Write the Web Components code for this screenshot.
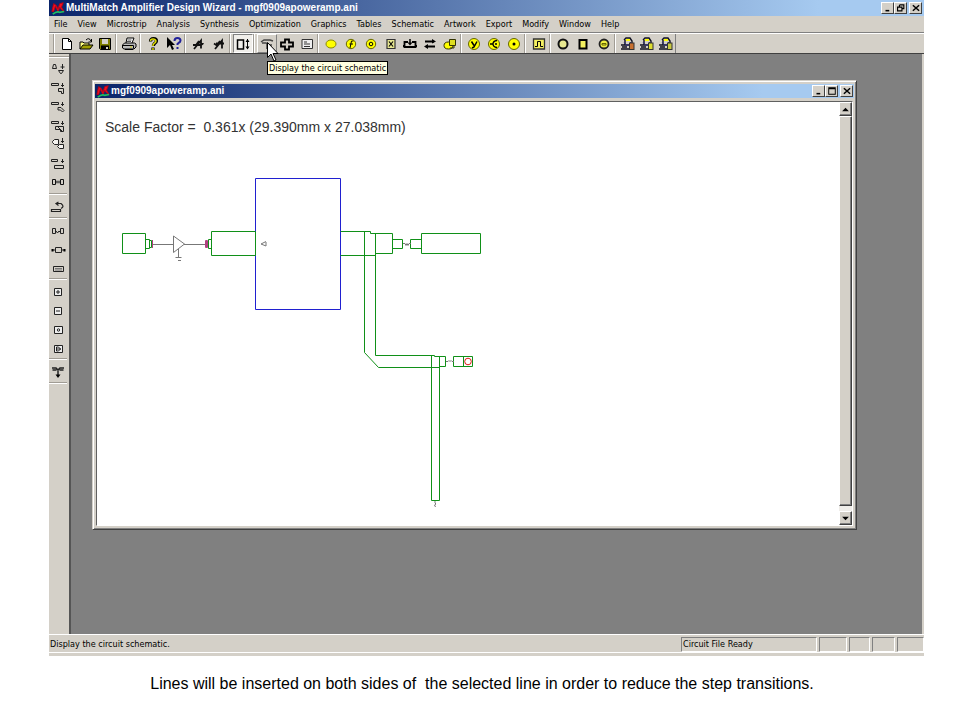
<!DOCTYPE html>
<html lang="en">
<head>
<meta charset="utf-8">
<title>MultiMatch Amplifier Design Wizard</title>
<style>
  html, body { height: 100%; }
  body {
    margin: 0; background: #fff; color: #000;
    font-family: "DejaVu Sans Condensed", "DejaVu Sans", sans-serif; font-size: 9px;
    display: flex; flex-direction: column;
  }
  app-window { flex: 1; margin: 0 36px 0 49px; min-height: 0; }
</style>
</head>
<body>
<app-window heading="MultiMatch Amplifier Design Wizard - mgf0909apoweramp.ani"></app-window>
<slide-caption>Lines will be inserted on both sides of  the selected line in order to reduce the step transitions.</slide-caption>

<script>
const Y = '#ffff00';
const lock = c => `<path d="M4 4l2-2h4l2 3v4H5V4M1 9h4M2 11h5M1 13h9" fill="none" stroke="#101020" stroke-width="1.4"/><path d="M6 3h4v2H6z" fill="${Y}"/><path d="M4 6l3 4 4-4" fill="none" stroke="#30307a"/><rect x="9.5" y="7" width="4.5" height="6.5" fill="${c}" stroke="#333"/>`;
const ICONS = {
  new: '<path d="M3.5 2.5h6l3 3v8h-9z" fill="#fff" stroke="#000"/><path d="M9.5 2.5v3h3" fill="none" stroke="#000"/>',
  open: '<path d="M2 13V6h3l1 1h5v2" fill="#ffff80" stroke="#000"/><path d="M2 13l3-4h10l-3 4z" fill="#a0a000" stroke="#000"/><path d="M8 4q3-3 5 1M13.5 3v3h-3" fill="none" stroke="#000"/>',
  save: '<path d="M2.5 2.5h11v11h-10l-1-1z" fill="#808000" stroke="#000"/><path d="M5 3h6v5H5z" fill="#d4d0c8"/><path d="M4 9.5h8V14H4z" fill="#000"/><path d="M9 11h2v2H9z" fill="#d4d0c8"/>',
  print: '<path d="M5 7l1-5h7l-2 5" fill="#fff" stroke="#000"/><path d="M6.5 4h4M6 5.5h4" stroke="#555"/><path d="M1.5 9l2-2h10l1.5 1v3l-2 2h-10l-1.5-1z" fill="#bbb" stroke="#000"/><path d="M2 9.5h10.5v3M4 13.5h8" fill="none" stroke="#000"/><path d="M9 11h2" stroke="#cc0"/>',
  help: '<path d="M5.5 5.5q0-3 3-3t3 2.5q0 1.5-2 2.5l-1 1.5v1M8 11.5v2.5" fill="none" stroke="#000" stroke-width="3.2"/><path d="M5.5 5q0-2 2.5-2t3 2q0 1.5-2 2.5l-1 1.5v1M8 12v2" fill="none" stroke="#dddd00" stroke-width="1.5"/>',
  whats: '<path d="M1 1v11l3-3 2 5 2-1-2-4h3z" fill="#000"/><path d="M8.5 5q0-3 3-3t3 2.5q0 1.5-2 2.5l-1 1v1M11.5 11v2" fill="none" stroke="#22229a" stroke-width="2"/>',
  runA: '<path d="M4 13l7-8.500v8M5 9h6q2-1 2-2M3 9h4M9 5l-3 4" fill="none" stroke="#111" stroke-width="1.8"/>',
  runB: '<path d="M4 13l7-8.500v8M5 7.500h8M3 7.500l3 2M9 5l-3 4" fill="none" stroke="#111" stroke-width="1.8"/>',
  height: '<path d="M2.5 4h6v9h-6z" fill="none" stroke="#000" stroke-width="1.5"/><path d="M12.5 3v10" stroke="#000"/><path d="M10.5 6l2-3 2 3zM10.5 10.5l2 3 2-3z"/>',
  schem: '<path d="M2 6l3-2h6l3 1M3 7h4l3 2h3M8 7v6" fill="none" stroke="#444" stroke-width="1.5"/>',
  cross: '<path d="M6 3.5h4v3h4v4h-4v3H6v-3H2v-4h4z" fill="none" stroke="#000" stroke-width="1.8"/>',
  text: '<path d="M3 3.5h10.500v9H3z" fill="#eee" stroke="#333"/><path d="M5 6h3M5 8h6M5 10.5h6" stroke="#333"/>',
  dot: `<ellipse cx="8" cy="8" rx="5" ry="4" fill="${Y}" stroke="#880"/>`,
  dotF: `<circle cx="8" cy="8" r="4.7" fill="${Y}" stroke="#660"/><path d="M7 12l1.5-7h2M6.5 8h3.5" fill="none" stroke="#000"/>`,
  dotO: `<circle cx="8" cy="8" r="4.7" fill="${Y}" stroke="#660"/><circle cx="8" cy="8" r="1.8" fill="none" stroke="#000"/>`,
  boxX: '<path d="M4 3.5h8v9H4z" fill="#e8e890" stroke="#333" stroke-width="1.2"/><path d="M6 5.5l4 5M10 5.5l-4 5" stroke="#000" stroke-width="1.2"/>',
  loop: '<path d="M6 6H2.500v5h11V6H10" fill="none" stroke="#000" stroke-width="1.8"/><path d="M8 3v5" stroke="#000" stroke-width="1.5"/><path d="M5.5 6.500h5L8 9.5zM1 9h2v2H1zM13 9h2v2h-2z"/>',
  swap: '<path d="M3 5.5h9M4 10.5h9" stroke="#000" stroke-width="2"/><path d="M10 3l4 2.5-4 2zM6 8l-4 2.5L6 13z"/>',
  shapes: `<ellipse cx="6.5" cy="9.5" rx="4.5" ry="3.5" fill="${Y}" stroke="#330"/><path d="M7.5 3.5h6v6h-6z" fill="#dede20" stroke="#330"/><path d="M8 12h4v-2" fill="none" stroke="#330"/>`,
  cY: `<circle cx="8" cy="8" r="5.5" fill="${Y}" stroke="#660"/><path d="M5.5 5.5l2.500 4M11 5.5L8 11l-2 1" fill="none" stroke="#000" stroke-width="1.5"/>`,
  cBranch: `<circle cx="8" cy="8" r="5.5" fill="${Y}" stroke="#660"/><path d="M4 8h3M11 4.5Q7 5 7 8t4 3.5M9 8h2" fill="none" stroke="#000" stroke-width="1.3"/>`,
  cDot: `<circle cx="8" cy="8" r="5.5" fill="${Y}" stroke="#660"/><circle cx="8" cy="8" r="1.5"/>`,
  pulse: '<path d="M2.5 3h11v10h-11z" fill="#f4f060" stroke="#333" stroke-width="1.3"/><path d="M4 10.5h2.5V5.5h3v5H12" fill="none" stroke="#000"/>',
  ring: '<circle cx="8" cy="8" r="4.5" fill="#e8e890" stroke="#111" stroke-width="2"/>',
  square: '<path d="M4.5 4h7v8.500h-7z" fill="#f4f060" stroke="#000" stroke-width="2"/>',
  ringO: '<circle cx="8" cy="8" r="4.5" fill="#f0f040" stroke="#222" stroke-width="1.8"/><path d="M6 7.5h4v1.5H6z" fill="none" stroke="#660"/>',
  lockR: lock('#c87030'), lockY: lock('#dede30'), lockG: lock('#c8c840'),
  v1: '<path d="M2.500 7.5l1-4h2l1 4zM8.500 9.5h5l-2 3h-1z" fill="none" stroke="#222"/><path d="M12.500 3v5M10.5 6h4" fill="none" stroke="#222"/>',
  v2: '<path d="M1.5 3.5h7v2h-7zM8.5 8.5h5v5h-2v-2h-3z" fill="none" stroke="#222"/><path d="M12.5 3v4M11 5.5h3" stroke="#222"/>',
  v3: '<path d="M1.5 3.5h7v2h-7zM8 8.500h3l3 3-1.5 1.5-2-2H8z" fill="none" stroke="#222"/><path d="M12.5 3v4M11 5.5h3" stroke="#222"/>',
  v4: '<path d="M1.5 3.5h7v2h-7zM5.5 8.5h8v5h-3v-2h-5z" fill="none" stroke="#222"/><path d="M12.5 3v4M11 5.5h3M7 8l5 5" stroke="#222"/>',
  v5: '<path d="M4.5 3.5h4v5h-4l-2-2v-1zM9.5 8.5h4v4h-4l-2-2z" fill="#f4f2ee" stroke="#222"/><path d="M12.5 2v5M11 5.500h3" stroke="#222"/>',
  v6: '<path d="M1.5 4.5h6v2h-6zM4.5 10.5h9v3h-9z" fill="none" stroke="#222"/><path d="M12.5 4v4M11 6.5h3" stroke="#222"/>',
  v7: '<path d="M2.5 5.5h3v5h-3zM10.5 5.5h3v5h-3zM6 8h4" fill="none" stroke="#111"/><path d="M7 6.5v3M9 6.5v3" stroke="#555"/>',
  v8: '<path d="M1.5 10.5h9v2h-9zM7 4.5h4q4 3 0 5M8.5 3L6 4.5l2.5 2" fill="none" stroke="#222" stroke-width="1.200"/>',
  v9: '<path d="M2.5 5.500h3v5h-3zM10.5 5.500h3v5h-3zM6 8l1.500 2L9 8l1 1" fill="none" stroke="#222"/>',
  v10: '<path d="M5.5 5.500h6v5h-6zM2 8h3M12 8h3" fill="none" stroke="#222"/><path d="M1.5 7h2v2.5h-2zM13.5 7h2v2.5h-2z"/>',
  v11: '<path d="M3.500 5.5h10v5h-10z" fill="none" stroke="#222"/><path d="M5 7.5h7M5 9h7" stroke="#777"/>',
  plus: '<path d="M4.5 4.5h7v7h-7z" fill="#eee" stroke="#222"/><path d="M6 8h4M8 6v4" stroke="#222"/>',
  minus: '<path d="M4.5 4.5h7v7h-7z" fill="#eee" stroke="#222"/><path d="M6 8h4" stroke="#222"/>',
  boxO: '<path d="M4.5 4.5h8v7h-8z" fill="#eee" stroke="#222"/><circle cx="8.5" cy="8" r="1.2" fill="none" stroke="#222"/>',
  boxP: '<path d="M4.5 4.5h8v7h-8z" fill="#eee" stroke="#222"/><path d="M6.5 6v4h2l2-2-2-2zM7 8h4" fill="none" stroke="#222"/>',
  tee: '<path d="M2 4h4l2 2 2-2h4M2.5 6h4M9.5 6h4M8 6v6" fill="none" stroke="#222" stroke-width="1.5"/><path d="M5.500 10.5h5L8 14z"/>',
  min: '<path d="M4 11h6v2.500H4z"/>',
  max: '<path d="M2 2h12v12H2zM3.500 5v7.500h9V5z" fill-rule="evenodd"/>',
  restore: '<path d="M5.5 3h7v6H10M5.500 3v3M2.500 6.500h7v6h-7z" fill="none" stroke="#000" stroke-width="1.8"/>',
  close: '<path d="M3 3.5l10 9M13 3.5l-10 9" stroke="#000" stroke-width="2.4"/>',
  up: '<path d="M2 11l6-6 6 6z"/>',
  down: '<path d="M2 5l6 6 6-6z"/>',
  logo: '<path d="M1 12L3 3l3 2 2 4 2-6 4-1-2 5 3 5-3-2-2-3-2 5-3-6-2 6z" fill="#f01020" stroke="#c00010"/><path d="M2 15q5-4 8-2l5-1" fill="none" stroke="#20c060" stroke-width="2"/>'
};
const icon = (name, size) => `<svg width="${size}" height="${size}" viewBox="0 0 16 16" fill="#000" aria-hidden="true">${ICONS[name]}</svg>`;

function define(name, render) {
  customElements.define(name, class extends HTMLElement {
    connectedCallback() {
      if (this.shadowRoot) return;
      this.attachShadow({ mode: 'open' }).innerHTML = render(this).trim();
    }
  });
}

/* One picture button of a toolbar; the slot takes a tooltip. */
define('tool-button', el => `
<style>
  :host { display: flex; flex: 1; position: relative; min-width: 0; min-height: 0; }
  button { flex: 1; min-width: 0; min-height: 0; padding: 0; border: 1px solid transparent; background: none; display: flex; align-items: center; justify-content: center; overflow: hidden; }
  :host([pressed]) button { background: #f0eeea; border-color: #808080 #fff #fff #808080; }
  :host([raised]) button { border-color: #fff #808080 #808080 #fff; }
  svg { display: block; flex: none; }
</style>
<button type="button" aria-label="${el.getAttribute('label')}">${icon(el.getAttribute('icon'), 16)}</button><slot></slot>`);

define('tool-tip', () => `
<style>
  :host { position: absolute; left: 10px; top: 27px; z-index: 5; }
  .tip { background: #ffffe1; border: 1px solid #000; padding: 0 1px; line-height: 12px; white-space: nowrap; }
  svg { position: absolute; left: 0; top: -19px; }
</style>
<div class="tip" role="tooltip"><slot></slot></div>
<svg width="12" height="20" viewBox="0 0 12 20"><path d="M.5 .5v15l3.5-3.5 3 7 2-1-3-6.500h5z" fill="#fff" stroke="#000"/></svg>`);

define('title-bar', el => {
  const inner = el.hasAttribute('inner');
  return `
<style>
  :host { display: flex; align-items: center; height: 16px; padding: 0 2px; color: #fff;
    background: linear-gradient(90deg, #0a246a, #a6caf0 88%); }
  :host([inner]) { height: 14px; padding: 0 1px; }
  h1 { flex: 1; margin: 0 0 0 1px; font: bold 10px/14px "Liberation Sans", Arial, sans-serif; white-space: nowrap; overflow: hidden; }
  svg { display: block; flex: none; }
  button { box-sizing: border-box; width: 13px; height: 12px; padding: 0; border: 1px solid; border-color: #fff #404040 #404040 #fff; background: #d4d0c8; display: flex; justify-content: center; align-items: center; overflow: hidden; }
  .close { margin-left: 2px; }
</style>
${icon('logo', 14)}<h1>${el.getAttribute('heading')}</h1>
<button type="button" aria-label="Minimize">${icon('min', 10)}</button>
<button type="button" aria-label="${inner ? 'Maximize' : 'Restore'}">${icon(inner ? 'max' : 'restore', 10)}</button>
<button type="button" class="close" aria-label="Close">${icon('close', 10)}</button>`;
});

define('menu-bar', () => `
<style>
  :host { display: block; border-bottom: 1px solid #808080; }
  nav { display: flex; padding: 0 6px 0 0; }
  button { border: 0; background: none; font: inherit; color: inherit; padding: 0 5px; line-height: 16px; white-space: nowrap; }
</style>
<nav>${'File,View,Microstrip,Analysis,Synthesis,Optimization,Graphics,Tables,Schematic,Artwork,Export,Modify,Window,Help'
  .split(',').map(t => `<button type="button">${t}</button>`).join('')}</nav>`);

const TOP = [
  [62, 'new:New', 'open:Open', 'save:Save'], [24, 'print:Print'], [45, 'help:Help', 'whats:Context help'],
  [45, 'runA:Analyze', 'runB:Analyze all'], [24, 'height:Dimensions'],
  [64, 'schem:Schematic', 'cross:Layout', 'text:Text'],
  [143, 'dot:Plot', 'dotF:Frequency', 'dotO:Circles', 'boxX:Matrix', 'loop:Feedback', 'swap:Swap', 'shapes:Shapes'],
  [64, 'cY:Admittance', 'cBranch:Branch', 'cDot:Point'], [25, 'pulse:Pulse'],
  [65, 'ring:Ring', 'square:Square', 'ringO:Ellipse'], [61, 'lockR:Lock one', 'lockY:Lock two', 'lockG:Lock three']
];
const toolButton = (spec, extra = '', body = '') => {
  const [i, l] = spec.split(':');
  return `<tool-button icon="${i}" label="${l}" ${extra}>${body}</tool-button>`;
};
define('tool-bar', () => `
<style>
  :host { display: flex; height: 19px; padding-left: 5px; border-top: 1px solid #fff; border-bottom: 1px solid #404040; }
  .group { display: flex; box-sizing: border-box; width: var(--w); padding: 0 1px 0 2px; border-left: 1px solid #fff; box-shadow: -1px 0 #a09c94; }
  .end { width: 1px; box-shadow: -1px 0 #808080; }
</style>
${TOP.map(([w, ...b]) => `<div class="group" style="--w:${w}px">${b.map(s =>
  s.startsWith('height') ? toolButton(s, 'pressed') :
  s.startsWith('schem') ? toolButton(s, 'raised', '<tool-tip>Display the circuit schematic</tool-tip>') :
  toolButton(s)).join('')}</div>`).join('')}<div class="end"></div>`);

const SIDE = [
  [134, 'v1:Taper', 'v2:Corner', 'v3:Mitred bend', 'v4:Tee', 'v5:Step', 'v6:Line', 'v7:Gap'],
  [24, 'v8:Undo'], [61, 'v9:Inductor', 'v10:Resistor', 'v11:Capacitor'],
  [80, 'plus:Insert', 'minus:Remove', 'boxO:Via', 'boxP:Port'], [24, 'tee:Junction']
];
define('side-bar', () => `
<style>
  :host { display: block; flex: none; box-sizing: border-box; width: 22px; background: #d4d0c8; padding: 3px 0 0; border-right: 2px solid #555; }
  .bar { border-top: 1px solid #fff; box-shadow: 0 -1px #a09c94; padding: 2px 2px 0 0; }
  .group { display: flex; flex-direction: column; box-sizing: border-box; height: var(--h); padding: 3px 0 0; border-bottom: 1px solid #a09c94; box-shadow: 0 1px #fff; }
  .group:first-child { padding: 0 0 2px; }
</style>
<div class="bar">${SIDE.map(([h, ...b]) => `<div class="group" style="--h:${h}px">${b.map(s => toolButton(s)).join('')}</div>`).join('')}</div>`);

define('scroll-bar', () => `
<style>
  :host { display: flex; flex-direction: column; width: 13px; background: #efede9; }
  button, .thumb { box-sizing: border-box; background: #d4d0c8; border: 1px solid; border-color: #fff #404040 #404040 #fff; box-shadow: inset -1px -1px #808080; }
  button { height: 14px; padding: 0; display: flex; align-items: center; justify-content: center; }
  .thumb { flex: 1; margin-bottom: 5px; }
</style>
<button type="button" aria-label="Scroll up">${icon('up', 9)}</button><div class="thumb"></div>
<button type="button" aria-label="Scroll down">${icon('down', 9)}</button>`);

/* Microstrip artwork; the viewBox uses workspace coordinates. */
define('circuit-layout', () => `
<style>
  :host { display: block; padding: 16px 8px 0; overflow: hidden; min-width: 0; }
  p { margin: 0; font: 14px/18px "Liberation Sans", Arial, sans-serif; color: #333; white-space: pre; }
  svg { display: block; margin-top: 4px; }
</style>
<p>Scale Factor =  0.361x (29.390mm x 27.038mm)</p>
<svg width="400" height="370" viewBox="105 140 400 370" fill="none" role="img" aria-label="Amplifier layout">
  <g stroke="#2020d0"><path d="M255.5 178.5H340.5V309.5H255.5z"/></g>
  <g stroke="#109018">
    <path d="M122.5 233.5h23v20h-23zM145.5 239.5h4v9h-4zM149.5 240.5h2v7h-2z"/>
    <path d="M211.5 231.5h44v24h-44zM208.5 239.5h3v9h-3z"/>
    <path d="M340.5 231.5h30v2h22v20h-17M340.5 255.5h35M364.5 231.5v121l14 15h60.5M375.5 233.5v122h59v1h11v10h-6"/>
    <path d="M392.5 239.5h10v9h-10zM410.5 239.5h11v9h-11zM421.5 233.5h59v20h-59z"/>
    <path d="M431.5 355.5v145h8v-144M453.5 356.5h19v10h-19zM463.5 356.5v10"/>
  </g>
  <path d="M152.5 240v8M205.5 240.5h2v7h-2zM206.5 240v8" stroke="#b04080"/>
  <g stroke="#777">
    <path d="M153 244.5h20M184 244.500h21M173.5 236v16.5l11-8.500zM178.5 249v8M175.5 257.5h6M178 260.5h3M266 241.5l-5 2.5 5 2v-4"/>
    <path d="M403 243.5h2l1 2 1-2 1 2 1-2h2M446 361.5h2l1-1 1 1 1-1 1 1h2M435 501v2l1 1-1.5 1 1 2"/>
  </g>
  <circle cx="468" cy="361.5" r="3.3" stroke="#e01818"/>
</svg>`);

define('document-window', el => `
<style>
  :host { display: flex; flex-direction: column; box-sizing: border-box; background: #d4d0c8; border: 1px solid; border-color: #d4d0c8 #404040 #404040 #d4d0c8;
    box-shadow: inset 1px 1px #fff, inset -1px -1px #808080; padding: 3px 2px; }
  .client { flex: 1; display: flex; min-height: 0; background: #fff; border: 1px solid; border-color: #606060 #fff #fff #606060; margin: 3px 1px 0; }
  ::slotted(*) { flex: 1; min-width: 0; }
</style>
<title-bar inner heading="${el.getAttribute('heading')}"></title-bar>
<div class="client"><slot></slot><scroll-bar></scroll-bar></div>`);

define('status-bar', () => `
<style>
  :host { display: flex; gap: 2px; height: 22px; box-sizing: border-box; padding: 2px 0 0 1px; border-top: 1px solid #fff; box-shadow: inset 0 -3px #d4d0c8, inset 0 -4px #fff; line-height: 13px; }
  span { box-sizing: border-box; height: 15px; width: var(--w); border: 1px solid; border-color: #808080 #fff #fff #808080; white-space: nowrap; padding-left: 1px; }
  .msg { flex: 1; border-color: transparent; padding: 0; border-left: 0; }
</style>
<span class="msg">Display the circuit schematic.</span>
<span style="--w:136px">Circuit File Ready</span>${[28, 21, 23, 27].map(w => `<span style="--w:${w}px"></span>`).join('')}`);

define('app-window', el => `
<style>
  :host { display: flex; flex-direction: column; background: #d4d0c8; }
  .work { flex: 1; display: flex; min-height: 0; }
  .desk { flex: 1; display: flex; min-width: 0; background: #808080; padding: 26px 65px 104px 21px; margin-right: 2px; }
  document-window { flex: 1; min-width: 0; }
</style>
<title-bar heading="${el.getAttribute('heading')}"></title-bar>
<menu-bar></menu-bar><tool-bar></tool-bar>
<div class="work"><side-bar></side-bar><main class="desk">
  <document-window heading="mgf0909apoweramp.ani"><circuit-layout></circuit-layout></document-window>
</main></div>
<status-bar></status-bar>`);

define('slide-caption', () => `
<style>
  :host { display: block; text-align: center; padding: 18px 0 26px 4px; font: 16px/20px "Liberation Sans", Arial, sans-serif; }
  p { margin: 0; white-space: pre-wrap; }
</style><p><slot></slot></p>`);
</script>
</body>
</html>
